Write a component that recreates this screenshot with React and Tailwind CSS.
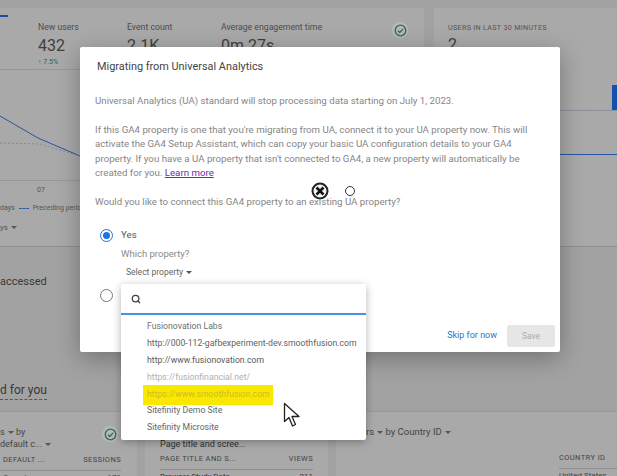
import { Search } from 'lucide-react'

const font = { fontFamily: 'Roboto, sans-serif' }

const properties = [
  { name: 'Fusionovation Labs', cls: 'text-[#6f6f6f]' },
  { name: 'http://000-112-gafbexperiment-dev.smoothfusion.com', cls: 'text-[#5f5f5f]' },
  { name: 'http://www.fusionovation.com', cls: 'text-[#5a5a5a]' },
  { name: 'https://fusionfinancial.net/', cls: 'text-[#b0b0b0]' },
  { name: 'https://www.smoothfusion.com', cls: 'text-[#c9bd20]', highlight: true },
  { name: 'Sitefinity Demo Site', cls: 'text-[#666666]' },
  { name: 'Sitefinity Microsite', cls: 'text-[#666666]' },
]

function Check() {
  return (
    <div className="w-[16px] h-[16px] rounded-full bg-[#b4bab6] flex items-center justify-center shrink-0">
      <svg width="13" height="13" viewBox="0 0 16 16" fill="none" stroke="#2f6b4a" strokeWidth="1.6">
        <circle cx="8" cy="8" r="6.5" />
        <path d="M4.8 8.2l2.2 2.2 4.2-4.4" />
      </svg>
    </div>
  )
}

function Caret() {
  return <span className="inline-block w-0 h-0 border-x-[3px] border-x-transparent border-t-[3px] border-t-[#555555] ml-[3px] align-middle" />
}

function Metric({ label, value, className }) {
  return (
    <div className={className}>
      <div className="text-[8.7px] leading-[10px] text-[#4c4c4c] whitespace-nowrap">{label}</div>
      <div className="text-[16px] leading-[20px] mt-[4px] text-[#3f3f3f]">{value}</div>
    </div>
  )
}

function TableHead({ left, right, className = '' }) {
  return (
    <div className={`flex justify-between tracking-[0.4px] text-[7.5px] leading-[9px] mt-[5px] pb-[6px] border-b border-[#8f8f90] whitespace-nowrap ${className}`}>
      <span>{left}</span>
      <span>{right}</span>
    </div>
  )
}

function Background() {
  return (
    <div className="flex flex-col h-full pt-[8px]">
      <div className="flex gap-[10px] h-[239px] shrink-0">
        <div className="w-[424px] h-full bg-[#a9a9aa] border-b border-[#8f8f90] flex flex-col">
          <div className="flex h-[62px] pt-[14px] pr-[16px] border-b border-[#979798]">
            <div className="w-[38px] shrink-0">
              <div className="w-[8px] h-[2px] bg-[#1d4f9c] -mt-[7px]" />
            </div>
            <div className="w-[89px] shrink-0">
              <div className="text-[8.7px] leading-[10px] text-[#4c4c4c]">New users</div>
              <div className="text-[16px] leading-[20px] mt-[4px] text-[#3f3f3f]">432</div>
              <div className="text-[7px] leading-[8px] mt-[2px] text-[#2f5f45]">↑ 7.5%</div>
            </div>
            <Metric className="w-[94px] shrink-0" label="Event count" value="2.1K" />
            <Metric className="flex-1" label="Average engagement time" value="0m 27s" />
            <Check />
          </div>
          <div className="h-[110px] relative">
            <svg className="w-full h-full" viewBox="0 0 424 110" fill="none">
              <path d="M0 46L38 68L80 86" stroke="#27559f" strokeWidth="1" />
              <path d="M0 73L40 74L80 86" stroke="#6f84a8" strokeWidth="0.8" strokeDasharray="2 2" />
            </svg>
          </div>
          <div className="border-t border-[#979798] pl-[37px] text-[7px] leading-[9px] pt-[5px] text-[#555555]">07</div>
          <div className="text-[7px] leading-[9px] mt-[9px] text-[#555555] flex items-center whitespace-nowrap">
            <span>days</span>
            <span className="w-[10px] border-t border-dashed border-[#2a57a2] mx-[4px]" />
            <span>Preceding period</span>
          </div>
          <div className="text-[8px] leading-[10px] mt-[10px] text-[#555555]">ys<Caret /></div>
        </div>
        <div className="flex-1 h-full bg-[#a9a9aa] border-b border-[#8f8f90] pl-[14px] pt-[15px]">
          <div className="text-[7.2px] leading-[9px] tracking-[0.3px] text-[#555555] whitespace-nowrap">USERS IN LAST 30 MINUTES</div>
          <div className="text-[16px] leading-[20px] mt-[3px] text-[#3f3f3f]">2</div>
          <div className="mt-[30px] flex justify-end">
            <div className="w-[5px] h-[25px] bg-[#1450ac]" />
          </div>
          <div className="border-t border-[#8c9098] -ml-[14px]" />
          <div className="border-t border-[#27559f] mt-[43px] -ml-[14px]" />
        </div>
      </div>
      <div className="h-[70px] shrink-0 flex items-center text-[11px] text-[#383838]">accessed</div>
      <div className="h-[95px] shrink-0 border-b border-[#979798] flex items-end pb-[11px] text-[12px] text-[#383838]">
        <span className="border-b border-dashed border-[#555555]">d for you</span>
      </div>
      <div className="flex-1 flex gap-[8px] text-[9px] text-[#444444]">
        <div className="w-[137px] bg-[#a9a9aa] pr-[16px]">
          <div className="flex justify-between pt-[14px]">
            <div className="leading-[12px] whitespace-nowrap">
              <div>s<Caret /> by</div>
              <div>default c...<Caret /></div>
            </div>
            <div className="mr-[3px]"><Check /></div>
          </div>
          <TableHead left="DEFAULT ..." right="SESSIONS" className="pl-[3px]" />
          <div className="flex justify-between pt-[2px] pl-[3px] leading-[10px] text-[8px]">
            <span>Organic</span>
            <span>171</span>
          </div>
        </div>
        <div className="w-[183px] bg-[#a9a9aa] px-[15px]">
          <div className="pt-[27px] leading-[10px] whitespace-nowrap text-[#333333]">Page title and scree...</div>
          <TableHead left="PAGE TITLE AND S..." right="VIEWS" />
          <div className="flex justify-between pt-[2px] leading-[10px] text-[8px] text-[#333333]">
            <span>Browser Study Data</span>
            <span>211</span>
          </div>
        </div>
        <div className="flex-1 bg-[#a9a9aa] pl-[30px]">
          <div className="pt-[14px] text-[9.5px] leading-[12px] whitespace-nowrap">rs<Caret /> by Country ID<Caret /></div>
          <div className="ml-[193px] mt-[15px] tracking-[0.4px] text-[7.5px] leading-[9px] pb-[6px] border-b border-[#8f8f90] whitespace-nowrap">COUNTRY ID</div>
          <div className="ml-[193px] pt-[2px] leading-[10px] text-[8px] whitespace-nowrap">United States</div>
        </div>
      </div>
    </div>
  )
}

function Radio({ checked }) {
  return (
    <span className={`w-[13px] h-[13px] rounded-full border-[1.5px] flex items-center justify-center shrink-0 ${checked ? 'border-[#1a73e8]' : 'border-[#777777]'}`}>
      {checked && <span className="w-[7px] h-[7px] rounded-full bg-[#1a73e8]" />}
    </span>
  )
}

function Modal() {
  return (
    <div className="absolute left-[80px] top-[47px] w-[480px] h-[305px] bg-white rounded-[2px] shadow-[0_6px_24px_rgba(0,0,0,0.3)] flex flex-col">
      <div className="pl-[17px] pt-[12px] text-[10.9px] leading-[16px] text-[#444444]">Migrating from Universal Analytics</div>
      <div className="pl-[15px] pr-[26px] pt-[19px] text-[9.7px] leading-[14.4px] text-[#868686]">
        <p>Universal Analytics (UA) standard will stop processing data starting on July 1, 2023.</p>
        <p className="mt-[14.4px]">
          If this GA4 property is one that you're migrating from UA, connect it to your UA property now. This will
          activate the GA4 Setup Assistant, which can copy your basic UA configuration details to your GA4
          property. If you have a UA property that isn't connected to GA4, a new property will automatically be
          created for you. <span className="text-[#6a2bb0] underline">Learn more</span>
        </p>
        <p className="mt-[14.4px]">Would you like to connect this GA4 property to an existing UA property?</p>
      </div>
      <div className="pl-[20px] pt-[19px] flex items-center gap-[8px] text-[9.7px] leading-[14px] text-[#555555]">
        <Radio checked />
        <span>Yes</span>
      </div>
      <div className="pl-[41px] pt-[5px] text-[9.5px] leading-[14px] text-[#8a8a8a]">Which property?</div>
      <div className="pl-[46px] pt-[5px] text-[8.5px] leading-[12px] text-[#666666]">Select property<Caret /></div>
      <div className="pl-[20px] pt-[11px]"><Radio /></div>
      <div className="mt-auto flex justify-end items-center gap-[10px] pr-[5px] pb-[5px]">
        <span className="text-[9px] text-[#2b73c8]">Skip for now</span>
        <span className="w-[48px] h-[22px] rounded-[2px] bg-[#e6e6e6] flex items-center justify-center text-[8.5px] text-[#ababab]">Save</span>
      </div>
    </div>
  )
}

function Dropdown() {
  return (
    <div className="absolute left-[121px] top-[284px] w-[245px] h-[156px] bg-white rounded-[2px] shadow-[0_2px_8px_rgba(0,0,0,0.3)]">
      <div className="h-[31px] flex items-center pl-[10px] border-b-2 border-[#4a90e2]">
        <Search size={10} strokeWidth={3} color="#444444" />
      </div>
      <ul className="pt-[3px] text-[8.7px] leading-[16.9px]">
        {properties.map(p => (
          <li key={p.name} className={`pl-[26px] whitespace-nowrap h-[16.9px] ${p.cls}`}>
            {p.highlight
              ? <span className="-ml-[4px] pl-[4px] flex items-center bg-[#fbe800] w-[130px] h-[20px] -translate-y-[1px]">{p.name}</span>
              : p.name}
          </li>
        ))}
      </ul>
    </div>
  )
}

export default function App() {
  return (
    <div className="relative w-[617px] h-[476px] overflow-hidden bg-[#a2a2a3]" style={font}>
      <Background />
      <Modal />
      <Dropdown />
      <svg className="absolute left-[310px] top-[181px]" width="48" height="20" viewBox="0 0 48 20" fill="none">
        <circle cx="10" cy="10" r="7.5" stroke="#222222" strokeWidth="2" fill="#f4f4f4" />
        <path d="M6.5 6.5l7 7M13.5 6.5l-7 7" stroke="#111111" strokeWidth="2.6" />
        <circle cx="40" cy="10" r="4.5" stroke="#333333" strokeWidth="1" fill="#ffffff" />
      </svg>
      <svg className="absolute left-[283px] top-[402px]" width="20" height="28" viewBox="0 0 20 28" fill="none">
        <path d="M1.5 1.5L1.5 19.5L6 15.5L9.5 24L12.5 22.5L9 14.5L16 14.5Z" fill="#ffffff" stroke="#222222" strokeWidth="1.3" strokeLinejoin="round" />
      </svg>
    </div>
  )
}
